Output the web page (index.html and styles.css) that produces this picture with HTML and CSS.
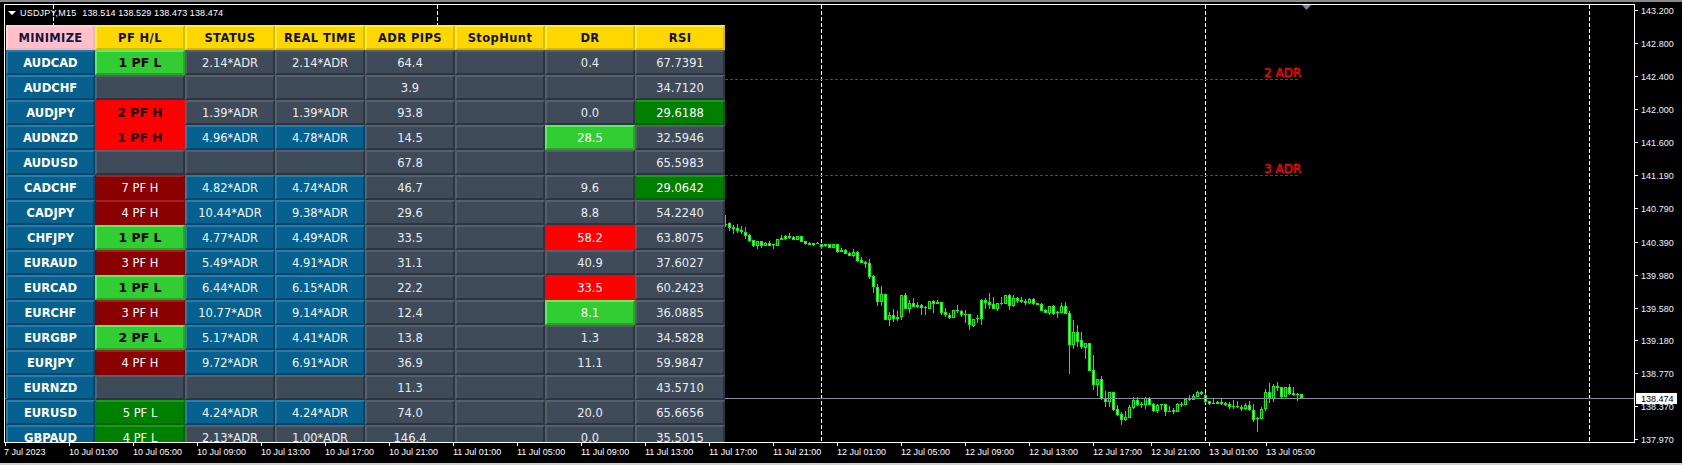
FILE: index.html
```html
<!DOCTYPE html>
<html lang="en">
<head>
<meta charset="utf-8">
<title>USDJPY,M15</title>
<link rel="stylesheet" href="styles.css">
</head>
<body>
<div class="terminal">
  <svg id="chart" class="chart" width="1682" height="465" viewBox="0 0 1682 465" xmlns="http://www.w3.org/2000/svg">
    <g class="grid">
      <line x1="53.5" y1="5" x2="53.5" y2="442"/>
      <line x1="437.5" y1="5" x2="437.5" y2="442"/>
      <line x1="821.5" y1="5" x2="821.5" y2="442"/>
      <line x1="1205.5" y1="5" x2="1205.5" y2="442"/>
      <line x1="1589.5" y1="5" x2="1589.5" y2="442"/>
    </g>
    <g class="adr">
      <line x1="725" y1="79.5" x2="1298" y2="79.5"/>
      <line x1="725" y1="175.5" x2="1298" y2="175.5"/>
      <text x="1264" y="77">2 ADR</text>
      <text x="1264" y="173">3 ADR</text>
    </g>
    <polygon class="shift" points="1302,5 1311,5 1306.5,10"/>
    <g id="candles"></g>
    <line class="bid" x1="5" y1="398.5" x2="1634" y2="398.5"/>
    <path class="frame" d="M4.5 4.5H1634.5V442.5H4.5Z"/>
    <path class="frame" d="M1635 10.5h3M1635 43.5h3M1635 76.5h3M1635 109.5h3M1635 142.5h3M1635 175.5h3M1635 208.5h3M1635 242.5h3M1635 275.5h3M1635 308.5h3M1635 340.5h3M1635 373.5h3M1635 406.5h3M1635 439.5h3"/>
    <path class="frame" d="M5.5 443v3M69.5 443v3M133.5 443v3M197.5 443v3M261.5 443v3M325.5 443v3M389.5 443v3M453.5 443v3M517.5 443v3M581.5 443v3M645.5 443v3M709.5 443v3M773.5 443v3M837.5 443v3M901.5 443v3M965.5 443v3M1029.5 443v3M1093.5 443v3M1151.5 443v3M1209.5 443v3M1266.5 443v3"/>
    <g class="axis price">
      <text x="1641" y="14">143.200</text>
      <text x="1641" y="47">142.800</text>
      <text x="1641" y="80">142.400</text>
      <text x="1641" y="113">142.000</text>
      <text x="1641" y="146">141.600</text>
      <text x="1641" y="179">141.190</text>
      <text x="1641" y="212">140.790</text>
      <text x="1641" y="246">140.390</text>
      <text x="1641" y="279">139.980</text>
      <text x="1641" y="312">139.580</text>
      <text x="1641" y="344">139.180</text>
      <text x="1641" y="377">138.770</text>
      <text x="1641" y="410">138.370</text>
      <text x="1641" y="443">137.970</text>
    </g>
    <rect class="last-box" x="1636" y="393" width="41" height="11"/>
    <text class="axis last-text" x="1641" y="402">138.474</text>
    <g class="axis time">
      <text x="4" y="455">7 Jul 2023</text>
      <text x="69" y="455">10 Jul 01:00</text>
      <text x="133" y="455">10 Jul 05:00</text>
      <text x="197" y="455">10 Jul 09:00</text>
      <text x="261" y="455">10 Jul 13:00</text>
      <text x="325" y="455">10 Jul 17:00</text>
      <text x="389" y="455">10 Jul 21:00</text>
      <text x="453" y="455">11 Jul 01:00</text>
      <text x="517" y="455">11 Jul 05:00</text>
      <text x="581" y="455">11 Jul 09:00</text>
      <text x="645" y="455">11 Jul 13:00</text>
      <text x="709" y="455">11 Jul 17:00</text>
      <text x="773" y="455">11 Jul 21:00</text>
      <text x="837" y="455">12 Jul 01:00</text>
      <text x="901" y="455">12 Jul 05:00</text>
      <text x="965" y="455">12 Jul 09:00</text>
      <text x="1029" y="455">12 Jul 13:00</text>
      <text x="1093" y="455">12 Jul 17:00</text>
      <text x="1151" y="455">12 Jul 21:00</text>
      <text x="1209" y="455">13 Jul 01:00</text>
      <text x="1266" y="455">13 Jul 05:00</text>
    </g>
  </svg>

  <div class="title"><span class="title-arrow"></span><span class="title-symbol">USDJPY,M15</span><span class="title-quotes">138.514 138.529 138.473 138.474</span></div>

  <div class="panel">
    <div class="cell head pink">MINIMIZE</div><div class="cell head">PF H/L</div><div class="cell head">STATUS</div><div class="cell head">REAL TIME</div><div class="cell head">ADR PIPS</div><div class="cell head">StopHunt</div><div class="cell head">DR</div><div class="cell head">RSI</div>

    <div class="cell sym">AUDCAD</div><div class="cell lime">1 PF L</div><div class="cell">2.14*ADR</div><div class="cell">2.14*ADR</div><div class="cell">64.4</div><div class="cell"></div><div class="cell">0.4</div><div class="cell">67.7391</div>
    <div class="cell sym">AUDCHF</div><div class="cell"></div><div class="cell"></div><div class="cell"></div><div class="cell">3.9</div><div class="cell"></div><div class="cell"></div><div class="cell">34.7120</div>
    <div class="cell sym">AUDJPY</div><div class="cell red">2 PF H</div><div class="cell">1.39*ADR</div><div class="cell">1.39*ADR</div><div class="cell">93.8</div><div class="cell"></div><div class="cell">0.0</div><div class="cell green">29.6188</div>
    <div class="cell sym">AUDNZD</div><div class="cell red">1 PF H</div><div class="cell blue">4.96*ADR</div><div class="cell blue">4.78*ADR</div><div class="cell">14.5</div><div class="cell"></div><div class="cell lime plain">28.5</div><div class="cell">32.5946</div>
    <div class="cell sym">AUDUSD</div><div class="cell"></div><div class="cell"></div><div class="cell"></div><div class="cell">67.8</div><div class="cell"></div><div class="cell"></div><div class="cell">65.5983</div>
    <div class="cell sym">CADCHF</div><div class="cell maroon">7 PF H</div><div class="cell blue">4.82*ADR</div><div class="cell blue">4.74*ADR</div><div class="cell">46.7</div><div class="cell"></div><div class="cell">9.6</div><div class="cell green">29.0642</div>
    <div class="cell sym">CADJPY</div><div class="cell maroon">4 PF H</div><div class="cell blue">10.44*ADR</div><div class="cell blue">9.38*ADR</div><div class="cell">29.6</div><div class="cell"></div><div class="cell">8.8</div><div class="cell">54.2240</div>
    <div class="cell sym">CHFJPY</div><div class="cell lime">1 PF L</div><div class="cell blue">4.77*ADR</div><div class="cell blue">4.49*ADR</div><div class="cell">33.5</div><div class="cell"></div><div class="cell red plain">58.2</div><div class="cell">63.8075</div>
    <div class="cell sym">EURAUD</div><div class="cell maroon">3 PF H</div><div class="cell blue">5.49*ADR</div><div class="cell blue">4.91*ADR</div><div class="cell">31.1</div><div class="cell"></div><div class="cell">40.9</div><div class="cell">37.6027</div>
    <div class="cell sym">EURCAD</div><div class="cell lime">1 PF L</div><div class="cell blue">6.44*ADR</div><div class="cell blue">6.15*ADR</div><div class="cell">22.2</div><div class="cell"></div><div class="cell red plain">33.5</div><div class="cell">60.2423</div>
    <div class="cell sym">EURCHF</div><div class="cell maroon">3 PF H</div><div class="cell blue">10.77*ADR</div><div class="cell blue">9.14*ADR</div><div class="cell">12.4</div><div class="cell"></div><div class="cell lime plain">8.1</div><div class="cell">36.0885</div>
    <div class="cell sym">EURGBP</div><div class="cell lime">2 PF L</div><div class="cell blue">5.17*ADR</div><div class="cell blue">4.41*ADR</div><div class="cell">13.8</div><div class="cell"></div><div class="cell">1.3</div><div class="cell">34.5828</div>
    <div class="cell sym">EURJPY</div><div class="cell maroon">4 PF H</div><div class="cell blue">9.72*ADR</div><div class="cell blue">6.91*ADR</div><div class="cell">36.9</div><div class="cell"></div><div class="cell">11.1</div><div class="cell">59.9847</div>
    <div class="cell sym">EURNZD</div><div class="cell"></div><div class="cell"></div><div class="cell"></div><div class="cell">11.3</div><div class="cell"></div><div class="cell"></div><div class="cell">43.5710</div>
    <div class="cell sym">EURUSD</div><div class="cell green">5 PF L</div><div class="cell blue">4.24*ADR</div><div class="cell blue">4.24*ADR</div><div class="cell">74.0</div><div class="cell"></div><div class="cell">20.0</div><div class="cell">65.6656</div>
    <div class="cell sym">GBPAUD</div><div class="cell green">4 PF L</div><div class="cell">2.13*ADR</div><div class="cell">1.00*ADR</div><div class="cell">146.4</div><div class="cell"></div><div class="cell">0.0</div><div class="cell">35.5015</div>
  </div>
</div>
<script src="chart.js"></script>
</body>
</html>
```

FILE: styles.css
```css
* { box-sizing: border-box; }

html, body {
  margin: 0;
  padding: 0;
  background: #000;
}

body {
  width: 1682px;
  height: 465px;
  overflow: hidden;
}

.terminal {
  position: relative;
  width: 1682px;
  height: 465px;
  background: linear-gradient(#8a8a8a 2px, #000 2px, #000 463px, #d4d0c8 463px);
}

.chart {
  position: absolute;
  top: 0;
  left: 0;
  display: block;
}

.grid line {
  stroke: #fff;
  stroke-width: 1;
  stroke-dasharray: 4 2;
  shape-rendering: crispEdges;
}

.adr line {
  stroke: #c81414;
  stroke-width: 1;
  stroke-dasharray: 3 2;
  shape-rendering: crispEdges;
}

.adr text {
  fill: #ff0000;
  stroke: #ff0000;
  stroke-width: 0.35px;
  font-family: "DejaVu Sans", sans-serif;
  font-size: 12px;
  font-weight: 400;
}

.shift { fill: #6f87a0; }

.bid {
  stroke: #8090a0;
  stroke-width: 1;
  shape-rendering: crispEdges;
}

.frame {
  fill: none;
  stroke: #fff;
  stroke-width: 1;
  shape-rendering: crispEdges;
}

.wick { fill: #00ff00; }
.body { fill: #00ff00; }
.core-up { fill: #000; }
.core-down { fill: #fff; }

.axis text, .axis.last-text {
  font-family: "Liberation Sans", sans-serif;
  font-size: 9px;
  fill: #fff;
}

.price text {
  fill: #e8f4ff;
  letter-spacing: 0.05px;
}

.last-box { fill: #fff; }
.axis.last-text { fill: #000; }

.title {
  position: absolute;
  top: 7px;
  left: 8px;
  display: flex;
  align-items: center;
  gap: 4px;
  height: 11px;
  font-family: "Liberation Sans", sans-serif;
  font-size: 9px;
  color: #fff;
  white-space: pre;
}

.title-arrow {
  width: 0;
  height: 0;
  border-left: 4px solid transparent;
  border-right: 4px solid transparent;
  border-top: 4px solid #fff;
}

.title-symbol {
  letter-spacing: 0.2px;
  margin-right: 2px;
}

.title-quotes { letter-spacing: 0.1px; }

.panel {
  position: absolute;
  top: 25px;
  left: 6px;
  width: 719px;
  height: 417px;
  overflow: hidden;
  display: grid;
  grid-template-columns: 89px repeat(7, 90px);
  grid-auto-rows: 25px;
  font-family: "DejaVu Sans", sans-serif;
  font-size: 11.5px;
  color: #e6edf3;
}

.cell {
  display: flex;
  align-items: center;
  justify-content: center;
  background: #404b59;
  border: 2px solid;
  border-color: #565f6c #2b343f #2b343f #565f6c;
  white-space: nowrap;
}

.head {
  background: #ffd700;
  border-color: #ffef33 #dcb900 #dcb900 #ffef33;
  color: #111;
  font-weight: 700;
  letter-spacing: 0.4px;
}

.head.pink {
  background: #ffc0cb;
  border-color: #ffd2da #f0b4c0 #f0b4c0 #ffd2da;
  color: #14143c;
  letter-spacing: 0.3px;
}

.sym {
  background: #07618f;
  border-color: #2a7ba7 #04466c #04466c #2a7ba7;
  color: #fff;
  font-weight: 700;
}

.blue {
  background: #07618f;
  border-color: #2a7ba7 #04466c #04466c #2a7ba7;
  color: #eef6fb;
}

.lime {
  background: #32cd32;
  border-color: #5bf05b #24a824 #24a824 #5bf05b;
  color: #000;
  font-weight: 700;
  font-size: 12.5px;
}

.red {
  background: #ff0000;
  border-color: #ff0000;
  color: #16000a;
  font-weight: 700;
  font-size: 12.5px;
}

.plain {
  color: #fff;
  font-weight: 400;
  font-size: 11.5px;
}

.maroon {
  background: #8b0000;
  border-color: #a52020 #8b0000 #8b0000 #8b0000;
  color: #fff;
}

.green {
  background: #008000;
  border-color: #1a9a1a #006400 #006400 #008000;
  color: #fff;
}
```

FILE: chart.js
```js
// Candles are read as [wickTop, wickBottom, bodyTop, bodyBottom, filled] in thirds of a pixel,
// each series relative to its own baseline.
var SERIES = [
  { x: 725, y: 200, rows: [
    [45,80,72,76,1],[66,94,70,84,1],[76,102,80,87,1],[72,100,84,94,1],[78,102,90,96,1],[82,118,96,108,1],
    [102,126,106,122,1],[121,140,121,137,1],[124,146,124,138,0],[124,145,124,138,1],[127,138,129,137,0],
    [124,138,129,137,1],[133,147,133,135,1],[118,137,118,137,0],[105,120,113,120,1],[104,120,108,116,1],
    [99,118,108,114,1],[109,120,111,119,1],[109,120,109,120,0],[109,125,109,125,1],[124,135,124,132,1],
    [126,135,129,134,1],[130,137,130,134,1],[126,132,129,131,1],[133,146,133,141,1],[133,142,133,137,1],
    [133,143,133,143,1],[133,143,133,143,0],[133,158,133,155,1],[144,156,151,155,1],[147,163,151,161,1],
    [157,168,159,167,1],[148,172,156,168,0],[154,187,157,183,1],[171,190,181,189,1],[183,205,186,191,1],
    [177,236,190,230,1],[226,279,229,261,1],[253,318,262,305,1],[258,318,283,305,0],[283,359,283,359,1],
    [336,378,346,359,0],[327,366,346,357,1],[334,362,352,357,1],[286,360,286,352,0],[280,328,286,326,1],
    [300,340,310,326,0],[294,322,310,320,1],[306,323,316,321,1],[312,345,316,323,1],[318,345,322,325,1],
    [304,328,304,328,0],[301,340,304,311,1],[301,312,306,311,1],[306,344,306,338,1],[325,352,337,345,1],
    [338,358,344,354,1],[331,355,331,355,0],[316,340,330,333,1],[330,352,332,344,1],[331,368,342,344,1],
    [343,390,343,376,1],[356,382,358,378,0],[346,370,355,358,1]
  ]},
  { x: 981, y: 280, rows: [
    [58,135,60,117,1],[54,87,60,68,1],[40,88,67,74,1],[52,88,72,86,1],[70,94,70,86,0],[52,75,69,72,1],
    [46,72,46,72,0],[42,90,46,78,1],[46,80,54,78,0],[52,68,54,62,1],[52,68,60,65,1],[58,75,62,68,1],
    [55,71,57,70,0],[55,76,57,72,1],[70,74,70,74,1],[70,94,72,93,1],[87,100,90,98,1],[79,106,79,100,0],
    [75,106,78,102,1],[92,114,96,100,1],[70,100,79,100,0],[66,102,78,102,1],[94,282,100,194,1],
    [120,208,156,196,0],[135,200,156,186,1],[156,208,181,201,1],[190,238,190,204,0],[190,272,190,272,1],
    [225,330,271,315,1],[298,348,298,315,0],[288,360,298,358,1],[334,382,357,365,1],[337,382,337,365,0],
    [337,394,337,390,1],[376,408,388,405,1],[396,435,403,420,1],[394,424,412,420,0],[376,414,382,413,0],
    [352,386,360,384,0],[352,378,361,375,1],[366,384,372,375,1],[352,388,354,375,0],[352,376,355,375,1],
    [370,396,372,392,1],[372,400,375,392,0],[373,390,373,376,1],[373,408,373,396,1],[378,396,393,395,1],
    [384,402,390,396,1],[370,396,372,396,0],[366,382,371,374,1],[357,376,357,376,0],[345,362,356,360,1],
    [342,360,348,360,0],[334,352,336,351,0],[333,346,337,342,1],[340,368,346,366,1],[362,375,364,372,1],
    [357,372,369,371,1],[362,372,367,371,1],[357,376,366,372,1],[365,378,369,375,1],[366,388,373,381,1],
    [360,386,378,380,1],[363,384,379,382,1],[376,392,381,386,1],[369,390,376,388,0],[364,394,376,391,1],
    [373,426,391,420,1],[410,456,414,418,1],[382,417,388,416,0],[328,392,337,388,0],[310,368,337,355,1],
    [312,366,319,356,0],[306,332,319,323,1],[320,354,322,351,1],[322,350,322,350,0],[312,346,322,342,1],
    [322,347,340,344,1],[340,362,342,344,1],[343,356,343,354,1]
  ]}
];

var NS = "http://www.w3.org/2000/svg";
var group = document.getElementById("candles");

function addRect(x, y, w, h, cls) {
  var r = document.createElementNS(NS, "rect");
  r.setAttribute("x", x);
  r.setAttribute("y", y);
  r.setAttribute("width", w);
  r.setAttribute("height", h);
  r.setAttribute("class", cls);
  r.setAttribute("shape-rendering", "crispEdges");
  group.appendChild(r);
}

SERIES.forEach(function (s) {
  s.rows.forEach(function (c, i) {
    var x = s.x + i * 4;
    var wt = Math.round(s.y + c[0] / 3), wb = Math.round(s.y + c[1] / 3);
    var bt = Math.round(s.y + c[2] / 3), bb = Math.round(s.y + c[3] / 3);
    if (bb <= bt) bb = bt + 1;
    addRect(x, wt, 1, Math.max(wb - wt, 1), "wick");
    addRect(x - 1, bt, 3, bb - bt, "body");
    if (bb - bt > 2) {
      addRect(x, bt + 1, 1, bb - bt - 2, c[4] ? "core-down" : "core-up");
    }
  });
});
```
